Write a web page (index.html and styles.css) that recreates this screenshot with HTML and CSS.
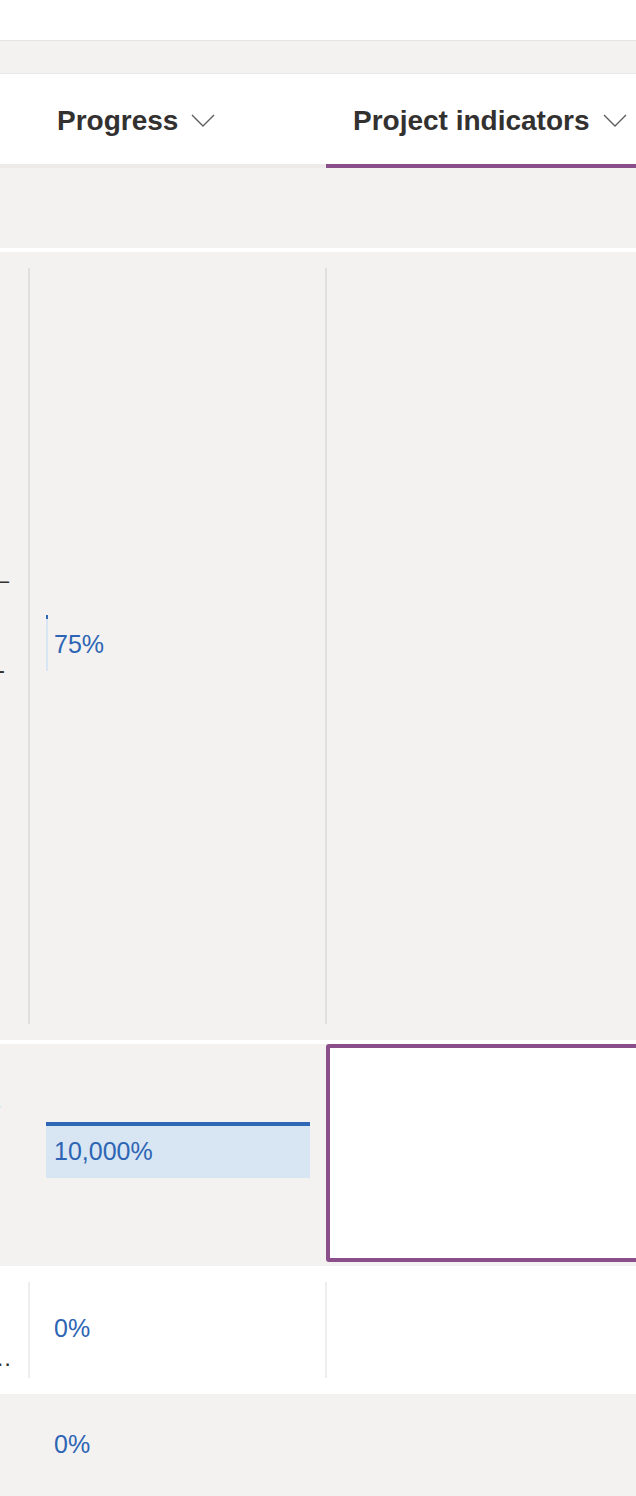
FILE: index.html
```html
<!DOCTYPE html>
<html lang="en">
<head>
    <meta charset="UTF-8">
    <meta name="viewport" content="width=device-width, initial-scale=1.0">
    <title>Project grid</title>
    <link rel="stylesheet" href="styles.css">
</head>

<body>
    <div class="topbar"></div>
    <div class="commandbar"></div>

    <!-- intestazione delle colonne -->
    <div class="grid grid-header">
        <div class="hcell"></div>
        <div class="hcell">
            <span>Progress</span>
            <svg class="chevron" viewBox="0 0 24 14"><path d="M1 1 L12 12 L23 1"/></svg>
        </div>
        <div class="hcell hcell-active">
            <span>Project indicators</span>
            <svg class="chevron" viewBox="0 0 24 14"><path d="M1 1 L12 12 L23 1"/></svg>
        </div>
    </div>

    <div class="group-row"></div>

    <!-- righe -->
    <div class="grid row row-gray row-tall">
        <div class="cell cell-lead">
            <div class="lead-text lead-text-first">
                <div class="lead-line">Kick-off with vendors –</div>
                <div class="lead-gap"></div>
                <div class="lead-line lead-line-end">Phase two sign-off -</div>
            </div>
        </div>
        <div class="cell cell-progress sep">
            <div class="progress">
                <div class="progress-fill" style="width: 2px;"></div>
                <span class="progress-value">75%</span>
            </div>
        </div>
        <div class="cell sep"></div>
    </div>

    <div class="grid row row-gray row-mid">
        <div class="cell cell-lead">
            <div class="lead-text lead-text-mid">
                <div class="lead-line lead-line-dot">Update budget for Q3.</div>
            </div>
        </div>
        <div class="cell cell-progress cell-progress-up">
            <div class="progress">
                <div class="progress-fill" style="width: 264px;"></div>
                <span class="progress-value">10,000%</span>
            </div>
        </div>
        <div class="cell cell-selected"></div>
    </div>

    <div class="grid row row-white row-short">
        <div class="cell cell-lead">
            <div class="lead-text lead-text-low">
                <div class="lead-line lead-line-dots">Collect feedback from the t…</div>
            </div>
        </div>
        <div class="cell cell-progress sep sep-light">
            <div class="progress">
                <div class="progress-fill" style="width: 0px;"></div>
                <span class="progress-value">0%</span>
            </div>
        </div>
        <div class="cell sep sep-light"></div>
    </div>

    <div class="grid row row-gray row-last">
        <div class="cell cell-lead"></div>
        <div class="cell cell-progress">
            <div class="progress">
                <div class="progress-fill" style="width: 0px;"></div>
                <span class="progress-value">0%</span>
            </div>
        </div>
        <div class="cell"></div>
    </div>
</body>
</html>
```

FILE: styles.css
```css
body {
    margin: 0;
    background-color: #ffffff;
    font-family: "Liberation Sans", Arial, sans-serif;
    color: #323130;
    overflow-x: hidden;
}

.topbar {
    height: 40px;
    background-color: #ffffff;
}

.commandbar {
    height: 32px;
    background-color: #f3f2f1;
    border-top: 1px solid #e6e4e2;
    border-bottom: 1px solid #eae8e6;
}

.grid {
    display: grid;
    grid-template-columns: 28px 297px 1fr;
}

/* intestazione */
.grid-header {
    height: 90px;
    background-color: #ffffff;
    border-bottom: 4px solid #edebe9;
}

.hcell {
    display: flex;
    align-items: center;
    gap: 13px;
    padding-left: 29px;
    padding-top: 4px;
    font-size: 28px;
    font-weight: bold;
    white-space: nowrap;
    margin-bottom: -4px;
    border-bottom: 4px solid transparent;
}

.hcell-active {
    padding-left: 27px;
    margin-left: 1px;
    border-bottom-color: #8a4f8a;
}

.chevron {
    width: 24px;
    height: 14px;
    fill: none;
    stroke: #605e5c;
    stroke-width: 1.4;
}

.group-row {
    height: 80px;
    background-color: #f3f2f1;
    margin-bottom: 4px;
}

/* righe */
.row-gray {
    background-color: #f3f2f1;
}

.row-white {
    background-color: #ffffff;
}

.row-tall {
    height: 788px;
    margin-bottom: 4px;
}

.row-mid {
    height: 222px;
}

.row-short {
    height: 128px;
}

.row-last {
    height: 104px;
}

.cell {
    display: flex;
    align-items: center;
}

.sep {
    margin: 16px 0;
    border-left: 2px solid #e1dfdd;
}

.sep-light {
    border-left-color: #efeeec;
}

.cell-progress {
    padding-left: 18px;
    padding-bottom: 6px;
}

.sep.cell-progress {
    padding-left: 16px;
    padding-bottom: 6px;
}

.cell-progress-up {
    padding-bottom: 10px;
}

.cell-selected {
    margin: 0 -8px 4px 1px;
    background-color: #ffffff;
    border: 4px solid #8a4f8a;
    border-radius: 3px;
}

/* barra di avanzamento */
.progress {
    position: relative;
    width: 264px;
    height: 56px;
    display: flex;
    align-items: center;
}

.progress-fill {
    position: absolute;
    left: 0;
    top: 0;
    height: 52px;
    background-color: #d8e5f3;
    border-top: 4px solid #2e67b3;
}

.progress-value {
    position: relative;
    padding-left: 8px;
    padding-top: 2px;
    font-size: 25px;
    color: #2d65b4;
}

/* colonna tagliata a sinistra */
.cell-lead {
    overflow: hidden;
    align-items: flex-start;
}

.lead-text {
    width: 28px;
    font-size: 24px;
    line-height: 30px;
}

.lead-text-first {
    padding-top: 313px;
}

.lead-text-mid {
    padding-top: 41px;
}

.lead-text-low {
    padding-top: 77px;
}

.lead-gap {
    height: 60px;
}

.lead-line {
    display: flex;
    justify-content: flex-end;
    white-space: nowrap;
    padding-right: 19px;
}

.lead-line-end {
    padding-right: 23px;
}

.lead-line-dot {
    padding-right: 26px;
}

.lead-line-dots {
    padding-right: 16px;
}
```
